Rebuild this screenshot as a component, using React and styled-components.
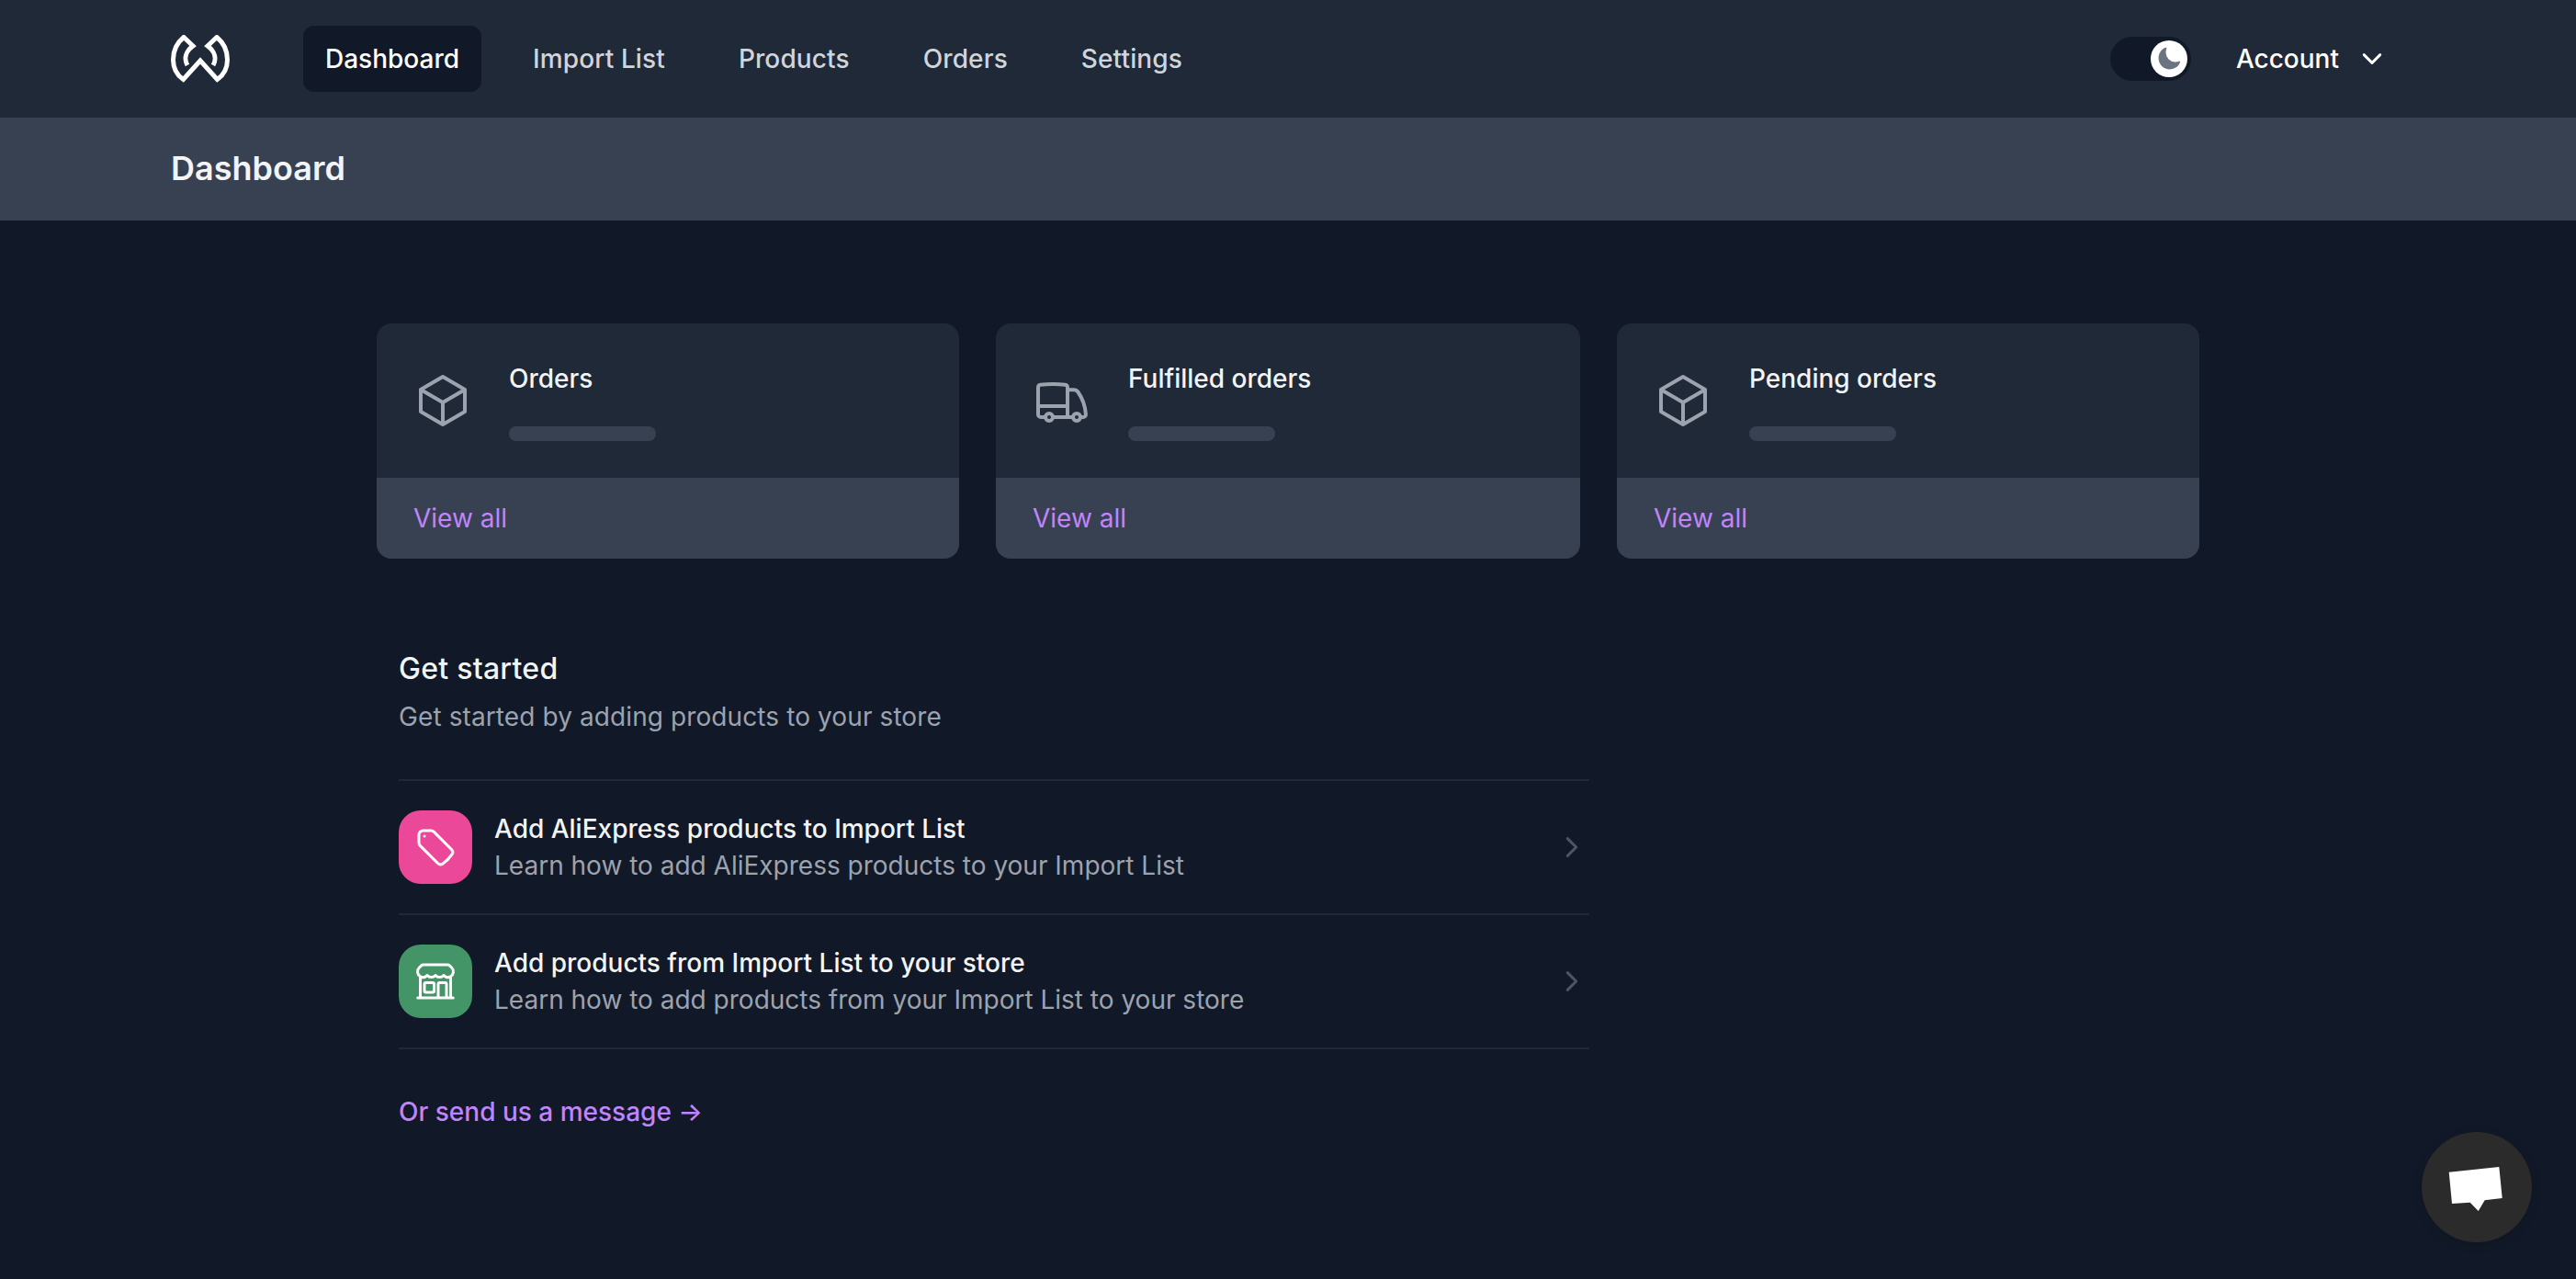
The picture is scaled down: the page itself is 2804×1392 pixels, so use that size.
import React from 'react'
import styled, { createGlobalStyle } from 'styled-components'
import {
  HiOutlineCube,
  HiOutlineTruck,
  HiOutlineTag,
  HiOutlineBuildingStorefront,
  HiOutlineChevronRight,
  HiOutlineChevronDown,
  HiMoon,
} from 'react-icons/hi2'

const GlobalStyle = createGlobalStyle`
  html, body {
    margin: 0;
    padding: 0;
    background: #111827;
    font-family: Inter, "Liberation Sans", sans-serif;
    font-size: 28px;
    line-height: 40px;
  }
  * { box-sizing: border-box; }
`

const Page = styled.div`
  min-height: 1392px;
  background: #111827;
`

const Nav = styled.nav`
  height: 128px;
  background: #1f2937;
  padding: 0 186px;
  display: flex;
  align-items: center;
`

const Logo = styled.svg`
  width: 64px;
  height: 52px;
  margin-right: 80px;
  flex-shrink: 0;
`

const NavLinks = styled.div`
  display: flex;
  gap: 32px;
`

const NavLink = styled.a`
  padding: 16px 24px;
  border-radius: 12px;
  font-weight: 500;
  letter-spacing: ${(p) => (p.$active ? '0' : '0.12px')};
  color: ${(p) => (p.$active ? '#ffffff' : '#d1d5db')};
  background: ${(p) => (p.$active ? '#111827' : 'transparent')};
`

const NavRight = styled.div`
  margin-left: auto;
  display: flex;
  align-items: center;
`

const Toggle = styled.div`
  width: 88px;
  height: 48px;
  padding: 4px;
  border-radius: 24px;
  background: #111827;
  display: flex;
  justify-content: flex-end;
`

const Knob = styled.span`
  width: 40px;
  height: 40px;
  border-radius: 50%;
  background: #ffffff;
  color: #6b7280;
  display: flex;
  align-items: center;
  justify-content: center;
  font-size: 28px;
`

const AccountButton = styled.div`
  margin-left: 49px;
  padding-right: 22px;
  display: flex;
  align-items: center;
  gap: 22px;
  color: #ffffff;
  font-weight: 500;
  font-size: 28px;
`

const SubHeader = styled.header`
  height: 112px;
  background: #374151;
  padding: 0 186px 2px;
  display: flex;
  align-items: center;
`

const Title = styled.h1`
  margin: 0;
  font-size: 36px;
  line-height: 56px;
  font-weight: 600;
  color: #f3f4f6;
`

const Main = styled.main`
  width: 1984px;
  margin: 0 auto;
  padding-top: 112px;
`

const Cards = styled.div`
  display: grid;
  grid-template-columns: 634px 636px 634px;
  gap: 40px;
`

const Card = styled.div`
  border-radius: 16px;
  overflow: hidden;
  background: #1f2937;
`

const CardBody = styled.div`
  padding: 40px;
  display: flex;
  align-items: center;
  gap: 40px;
  height: 168px;
`

const CardIcon = styled.span`
  display: flex;
  color: #9ca3af;
  font-size: 64px;
`

const CardName = styled.div`
  color: #f3f4f6;
  font-weight: 500;
`

const Skeleton = styled.div`
  width: 160px;
  height: 16px;
  margin-top: 32px;
  border-radius: 8px;
  background: #374151;
`

const CardFooter = styled.div`
  padding: 24px 40px;
  background: #374151;
  color: #c084fc;
`

const GetStarted = styled.section`
  width: 1344px;
  padding: 0 24px;
  margin-top: 96px;
`

const Heading = styled.h2`
  margin: 0;
  font-size: 32px;
  line-height: 48px;
  font-weight: 500;
  letter-spacing: 0.25px;
  color: #f3f4f6;
`

const Lead = styled.p`
  margin: 8px 0 0;
  letter-spacing: 0.1px;
  color: #9ca3af;
`

const Steps = styled.ul`
  list-style: none;
  margin: 48px 0 0;
  padding: 0;
  border-top: 2px solid #1f2937;
  border-bottom: 2px solid #1f2937;
`

const Step = styled.li`
  display: flex;
  align-items: center;
  gap: 24px;
  padding: 32px 0;
  & + & {
    border-top: 2px solid #1f2937;
  }
`

const StepIcon = styled.span`
  width: 80px;
  height: 80px;
  border-radius: 24px;
  background: ${(p) => p.$color};
  color: #ffffff;
  font-size: 48px;
  display: flex;
  align-items: center;
  justify-content: center;
  flex-shrink: 0;
`

const StepText = styled.div`
  flex: 1;
`

const StepTitle = styled.div`
  color: #f3f4f6;
  font-weight: 500;
`

const StepSub = styled.div`
  color: #9ca3af;
`

const Chevron = styled.span`
  display: flex;
  margin-right: 4px;
  color: #4b5563;
  font-size: 30px;
`

const MessageLink = styled.a`
  display: block;
  margin-top: 48px;
  color: #c084fc;
  font-weight: 500;
`

const ChatButton = styled.div`
  position: fixed;
  right: 48px;
  bottom: 40px;
  width: 120px;
  height: 120px;
  border-radius: 50%;
  background: #2b2b2b;
  box-shadow: 0 2px 12px rgba(0, 0, 0, 0.12);
`

const ChatGlyph = styled.svg`
  position: absolute;
  left: 0;
  top: 0;
  width: 120px;
  height: 120px;
`

const cards = [
  { name: 'Orders', Icon: HiOutlineCube },
  { name: 'Fulfilled orders', Icon: HiOutlineTruck },
  { name: 'Pending orders', Icon: HiOutlineCube },
]

const steps = [
  {
    title: 'Add AliExpress products to Import List',
    sub: 'Learn how to add AliExpress products to your Import List',
    color: '#ec4899',
    Icon: HiOutlineTag,
  },
  {
    title: 'Add products from Import List to your store',
    sub: 'Learn how to add products from your Import List to your store',
    color: '#439567',
    Icon: HiOutlineBuildingStorefront,
  },
]

const links = ['Dashboard', 'Import List', 'Products', 'Orders', 'Settings']

export default function App() {
  return (
    <Page>
      <GlobalStyle />
      <Nav>
        <Logo viewBox="0 0 64 52" fill="none" stroke="#fff" strokeWidth="5" strokeLinejoin="miter" strokeMiterlimit="3">
          <path d="M18 33 C14 26 16 18 24 12 L14 2.5 C6 9 2.5 18 2.5 27 C2.5 36 7 44 13.5 48.5 L32 28 L50.5 48.5 C57 44 61.5 36 61.5 27 C61.5 18 58 9 50 2.5 L40 12 C48 18 50 26 46 33" />
        </Logo>
        <NavLinks>
          {links.map((l, i) => (
            <NavLink key={l} $active={i === 0}>{l}</NavLink>
          ))}
        </NavLinks>
        <NavRight>
          <Toggle>
            <Knob><HiMoon /></Knob>
          </Toggle>
          <AccountButton>
            Account
            <HiOutlineChevronDown size={28} strokeWidth={2.5} />
          </AccountButton>
        </NavRight>
      </Nav>
      <SubHeader>
        <Title>Dashboard</Title>
      </SubHeader>
      <Main>
        <Cards>
          {cards.map(({ name, Icon }) => (
            <Card key={name}>
              <CardBody>
                <CardIcon><Icon /></CardIcon>
                <div>
                  <CardName>{name}</CardName>
                  <Skeleton />
                </div>
              </CardBody>
              <CardFooter>View all</CardFooter>
            </Card>
          ))}
        </Cards>
        <GetStarted>
          <Heading>Get started</Heading>
          <Lead>Get started by adding products to your store</Lead>
          <Steps>
            {steps.map(({ title, sub, color, Icon }) => (
              <Step key={title}>
                <StepIcon $color={color}><Icon /></StepIcon>
                <StepText>
                  <StepTitle>{title}</StepTitle>
                  <StepSub>{sub}</StepSub>
                </StepText>
                <Chevron><HiOutlineChevronRight strokeWidth={2.5} /></Chevron>
              </Step>
            ))}
          </Steps>
          <MessageLink>Or send us a message →</MessageLink>
        </GetStarted>
      </Main>
      <ChatButton>
        <ChatGlyph viewBox="0 0 120 120">
          <polygon fill="#fff" points="29.7,43.7 84.3,38 87.7,72 68.7,74.3 61.7,86 52.7,76.7 33,78" />
        </ChatGlyph>
      </ChatButton>
    </Page>
  )
}
